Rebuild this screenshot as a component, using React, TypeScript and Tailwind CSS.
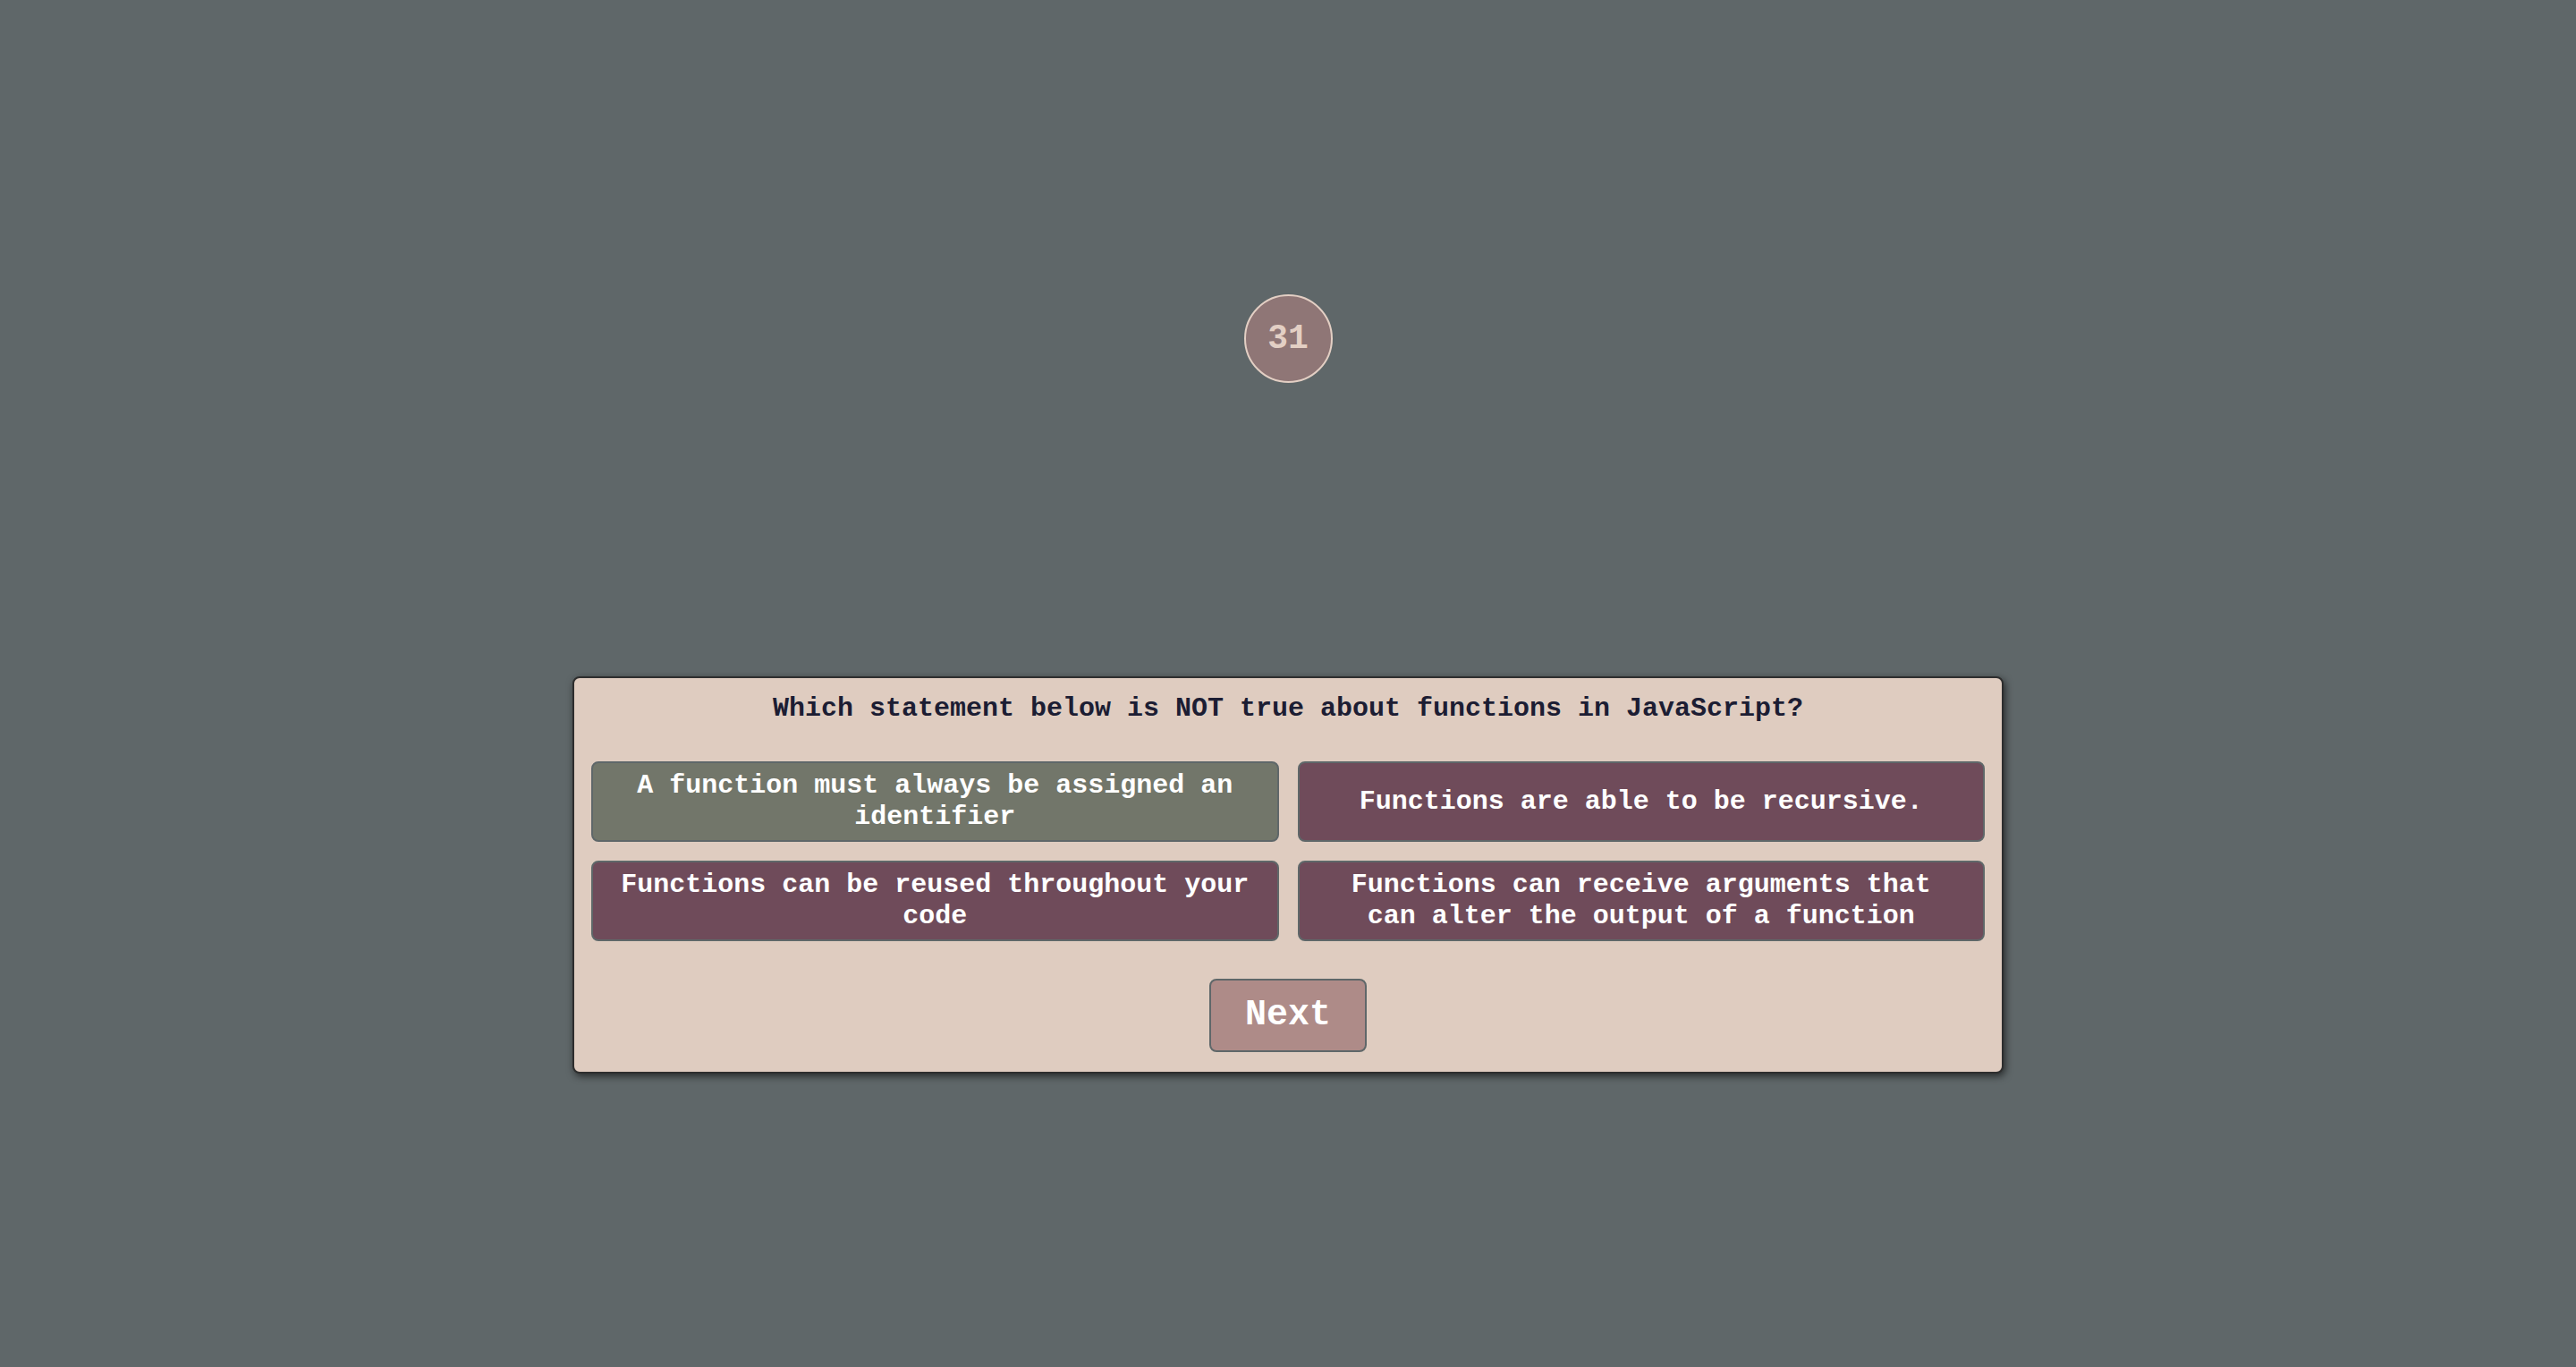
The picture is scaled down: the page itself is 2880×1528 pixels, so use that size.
import React from "react";

const font = { fontFamily: '"Liberation Mono", "DejaVu Sans Mono", monospace' };

export default function App() {
  const answers = [
    { text: "A function must always be assigned an identifier", bg: "bg-[#72766a]" },
    { text: "Functions are able to be recursive.", bg: "bg-[#6f4b5a]" },
    { text: "Functions can be reused throughout your code", bg: "bg-[#6f4b5a]" },
    { text: "Functions can receive arguments that can alter the output of a function", bg: "bg-[#6f4b5a]" },
  ];
  return (
    <div className="min-h-screen w-full bg-[#5f6769] flex flex-col items-center pt-[329px]" style={font}>
      <div className="w-[99px] h-[99px] rounded-full bg-[#8f7676] border-2 border-[#e3cfc4] flex items-center justify-center text-[38px] text-[#e3cfc4] font-bold leading-none">
        31
      </div>
      <div className="mt-[328px] w-[1600px] bg-[#dfccc0] border-2 border-[#2e2e2e] rounded-[8px] shadow-[2px_3px_8px_rgba(0,0,0,0.6)] px-[19px] pt-[17px] pb-[22px] flex flex-col items-center">
        <h2 className="text-[30px] leading-[35px] text-[#1c1d33] font-bold text-center">
          Which statement below is NOT true about functions in JavaScript?
        </h2>
        <div className="mt-[41px] grid grid-cols-2 gap-x-[21px] gap-y-[21px] w-full">
          {answers.map((a, i) => (
            <button
              key={i}
              className={`${a.bg} h-[90px] rounded-[8px] border-2 border-[#5f6769] px-[26px] flex items-center justify-center text-center text-white font-bold text-[30px] leading-[35px]`}
              style={font}
            >
              {a.text}
            </button>
          ))}
        </div>
        <button
          className="mt-[42px] w-[176px] h-[82px] rounded-[8px] border-2 border-[#5f6769] bg-[#ae8b88] text-white font-bold text-[40px] flex items-center justify-center"
          style={font}
        >
          Next
        </button>
      </div>
    </div>
  );
}
